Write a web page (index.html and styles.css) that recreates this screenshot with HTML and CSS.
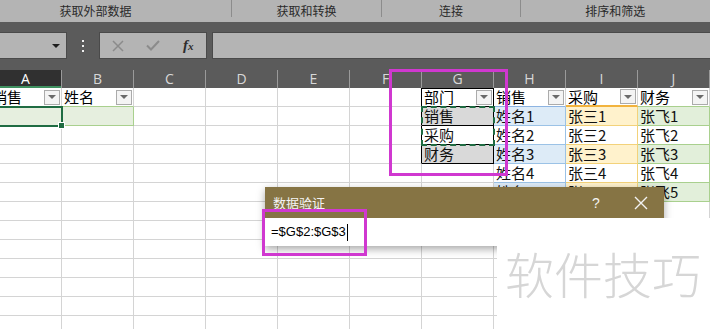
FILE: index.html
```html
<!DOCTYPE html>
<html lang="zh-CN">
<head>
    <meta charset="UTF-8">
    <meta name="viewport" content="width=device-width, initial-scale=1.0">
    <title>数据验证</title>
    <link rel="stylesheet" href="styles.css">
</head>
<body>
    <!-- ribbon group captions -->
    <div class="ribbon-groups">
        <div class="group g-external">获取外部数据</div>
        <div class="group g-transform">获取和转换</div>
        <div class="group g-connect">连接</div>
        <div class="group g-sort">排序和筛选</div>
    </div>

    <!-- name box + formula bar -->
    <div class="formula-bar">
        <div class="name-box"><span class="drop"></span></div>
        <div class="grip"><i></i><i></i><i></i></div>
        <div class="fx-buttons">
            <span><svg width="12" height="12" viewBox="0 0 12 12"><path d="M1 1L11 11M11 1L1 11" stroke="#8b8b8b" stroke-width="1.5" fill="none"/></svg></span>
            <span><svg width="14" height="11" viewBox="0 0 14 11"><path d="M1 5.5L5 9.5L13 1" stroke="#8b8b8b" stroke-width="2" fill="none"/></svg></span>
            <span class="fx"><i>f</i><i class="x">x</i></span>
        </div>
        <div class="formula-input"></div>
    </div>

    <!-- column letters -->
    <div class="col-heads">
        <div class="ch current">A</div>
        <div class="ch">B</div>
        <div class="ch">C</div>
        <div class="ch">D</div>
        <div class="ch">E</div>
        <div class="ch">F</div>
        <div class="ch">G</div>
        <div class="ch">H</div>
        <div class="ch">I</div>
        <div class="ch">J</div>
    </div>

    <div class="cells">
        <!-- row 1 -->
        <div class="c hd tbl-a">销售<span class="fb"></span></div>
        <div class="c hd tbl-a">姓名<span class="fb"></span></div>
        <div class="c"></div>
        <div class="c"></div>
        <div class="c"></div>
        <div class="c edge"></div>
        <div class="c hd dept top">部门<span class="fb"></span></div>
        <div class="c hd head-blue">销售<span class="fb"></span></div>
        <div class="c hd head-gold">采购<span class="fb"></span></div>
        <div class="c hd head-green">财务<span class="fb"></span></div>
        <!-- row 2 -->
        <div class="c active"><span class="handle"></span></div>
        <div class="c picked"></div>
        <div class="c"></div>
        <div class="c"></div>
        <div class="c"></div>
        <div class="c edge"></div>
        <div class="c dept band">销售</div>
        <div class="c blue band">姓名1</div>
        <div class="c gold band">张三1</div>
        <div class="c green band">张飞1</div>
        <!-- row 3 -->
        <div class="c"></div>
        <div class="c"></div>
        <div class="c"></div>
        <div class="c"></div>
        <div class="c"></div>
        <div class="c edge"></div>
        <div class="c dept">采购</div>
        <div class="c blue">姓名2</div>
        <div class="c gold">张三2</div>
        <div class="c green">张飞2</div>
        <!-- row 4 -->
        <div class="c"></div>
        <div class="c"></div>
        <div class="c"></div>
        <div class="c"></div>
        <div class="c"></div>
        <div class="c edge"></div>
        <div class="c dept band">财务</div>
        <div class="c blue band">姓名3</div>
        <div class="c gold band">张三3</div>
        <div class="c green band">张飞3</div>
        <!-- row 5 -->
        <div class="c"></div>
        <div class="c"></div>
        <div class="c"></div>
        <div class="c"></div>
        <div class="c"></div>
        <div class="c"></div>
        <div class="c"></div>
        <div class="c blue">姓名4</div>
        <div class="c gold">张三4</div>
        <div class="c green">张飞4</div>
        <!-- row 6 -->
        <div class="c"></div>
        <div class="c"></div>
        <div class="c"></div>
        <div class="c"></div>
        <div class="c"></div>
        <div class="c"></div>
        <div class="c"></div>
        <div class="c blue band">姓名5</div>
        <div class="c gold band">张三5</div>
        <div class="c green band">张飞5</div>
        <!-- rows 7 - 13 -->
        <div class="c"></div><div class="c"></div><div class="c"></div><div class="c"></div><div class="c"></div>
        <div class="c"></div><div class="c"></div><div class="c"></div><div class="c"></div><div class="c"></div>
        <div class="c"></div><div class="c"></div><div class="c"></div><div class="c"></div><div class="c"></div>
        <div class="c"></div><div class="c"></div><div class="c"></div><div class="c"></div><div class="c"></div>
        <div class="c"></div><div class="c"></div><div class="c"></div><div class="c"></div><div class="c"></div>
        <div class="c"></div><div class="c"></div><div class="c"></div><div class="c"></div><div class="c"></div>
        <div class="c"></div><div class="c"></div><div class="c"></div><div class="c"></div><div class="c"></div>
        <div class="c"></div><div class="c"></div><div class="c"></div><div class="c"></div><div class="c"></div>
        <div class="c"></div><div class="c"></div><div class="c"></div><div class="c"></div><div class="c"></div>
        <div class="c"></div><div class="c"></div><div class="c"></div><div class="c"></div><div class="c"></div>
        <div class="c"></div><div class="c"></div><div class="c"></div><div class="c"></div><div class="c"></div>
        <div class="c"></div><div class="c"></div><div class="c"></div><div class="c"></div><div class="c"></div>
        <div class="c"></div><div class="c"></div><div class="c"></div><div class="c"></div><div class="c"></div>
        <div class="c"></div><div class="c"></div><div class="c"></div><div class="c"></div><div class="c"></div>
    </div>

    <!-- overlays -->
    <div class="ants"></div>
    <div class="mark mark-range"></div>

    <div class="dialog">
        <div class="dialog-title">
            <span>数据验证</span>
            <span class="help">?</span>
            <span class="close"><svg width="14" height="14" viewBox="0 0 14 14"><path d="M1 1L13 13M13 1L1 13" stroke="#f2f2f2" stroke-width="1.4" fill="none"/></svg></span>
        </div>
        <div class="dialog-body">=$G$2:$G$3<span class="cursor"></span></div>
    </div>

    <div class="patch">软件技巧</div>
    <div class="mark mark-input"></div>
</body>
</html>
```

FILE: styles.css
```css
/* General */
body {
    margin: 0;
    width: 710px;
    height: 329px;
    overflow: hidden;
    position: relative;
    background: #fff;
    font-family: "Noto Sans CJK SC", sans-serif;
}

/* Ribbon captions */
.ribbon-groups {
    display: flex;
    height: 22px;
    margin-left: -40px;
    background: #b4b4b4;
    font-size: 12px;
    color: #2a2a2a;
}

.group {
    box-sizing: border-box;
    height: 17px;
    line-height: 21px;
    text-align: center;
    border-right: 1px solid #8c8c8c;
}

.g-external { width: 287px; }
.g-transform { width: 159px; }
.g-connect { width: 146px; }
.g-sort { width: 200px; border-right: none; }

/* Formula bar */
.formula-bar {
    display: flex;
    height: 27px;
    padding: 10px 0 11px;
    background: #5b5b5b;
}

.name-box {
    box-sizing: border-box;
    width: 67px;
    background: #b4b4b4;
    border: 1px solid #4a4a4a;
    border-left: none;
    display: flex;
    align-items: center;
    justify-content: flex-end;
    padding-right: 6px;
}

.drop {
    width: 0;
    height: 0;
    border-left: 4px solid transparent;
    border-right: 4px solid transparent;
    border-top: 4px solid #1e1e1e;
}

.grip {
    width: 32px;
    display: flex;
    flex-direction: column;
    align-items: center;
    justify-content: center;
    gap: 3px;
}

.grip i {
    width: 2px;
    height: 2px;
    background: #f0f0f0;
}

.fx-buttons {
    box-sizing: border-box;
    width: 108px;
    background: #b4b4b4;
    border: 1px solid #4a4a4a;
    display: flex;
    align-items: center;
}

.fx-buttons span {
    width: 36px;
    display: flex;
    justify-content: center;
    align-items: center;
}

.fx {
    font-family: "Liberation Serif", serif;
    font-size: 15px;
    color: #2d2d2d;
    font-weight: bold;
}

.fx .x {
    font-size: 11px;
}

.formula-input {
    flex: 1;
    margin-left: 5px;
    background: #b4b4b4;
    border: 1px solid #4a4a4a;
    border-right: none;
}

/* Column letters */
.col-heads {
    display: grid;
    grid-template-columns: repeat(10, 72px);
    height: 18px;
    margin-left: -10px;
    background: #5b5b5b;
}

.ch {
    box-sizing: border-box;
    border-right: 1px solid #9a9a9a;
    text-align: center;
    font-family: "Open Sans", sans-serif;
    font-size: 14px;
    line-height: 18px;
    color: #d8d8d8;
}

.ch.current {
    background: #303030;
    color: #fff;
    box-shadow: inset 0 -2px 0 #3f9160;
}

/* Cells */
.cells {
    display: grid;
    grid-template-columns: repeat(10, 72px);
    grid-auto-rows: 19px;
    margin-left: -10px;
}

.c {
    box-sizing: border-box;
    position: relative;
    border-right: 1px solid #d4d4d4;
    border-bottom: 1px solid #d4d4d4;
    padding: 0 1px 0 2px;
    font-size: 15px;
    line-height: 18px;
    color: #111;
    white-space: nowrap;
}

.hd {
    display: flex;
    justify-content: space-between;
    align-items: center;
    color: #000;
}

.fb {
    box-sizing: border-box;
    width: 16px;
    height: 15px;
    background: #f4f4f4;
    border: 1px solid #ababab;
    display: flex;
    align-items: center;
    justify-content: center;
}

.fb::after {
    content: "";
    border-left: 4px solid transparent;
    border-right: 4px solid transparent;
    border-top: 4px solid #6a6a6a;
}

.tbl-a {
    border-bottom-color: #a9d08e;
}

.active {
    z-index: 1;
    background: #e6efdf;
    outline: 2px solid #1f6c42;
    outline-offset: -1px;
}

.handle {
    position: absolute;
    right: -4px;
    bottom: -4px;
    width: 5px;
    height: 5px;
    background: #1f6c42;
    border: 1px solid #fff;
}

.picked {
    background: #e6efdf;
    border-right-color: #a9d08e;
    border-bottom-color: #a9d08e;
}

/* Department list */
.edge { border-right-color: #000; }

.dept {
    border-right-color: #000;
    border-bottom-color: #000;
}

.dept.top { box-shadow: inset 0 1px 0 #000; }
.dept.band { background: #d9d9d9; }

/* Banded tables */
.head-blue { border-bottom-color: #8db4e2; }
.head-gold { border-bottom: 2px solid #f2b33d; }
.head-green { border-bottom-color: #a9d08e; }

.blue {
    border-right-color: #9bc2e6;
    border-bottom-color: #9bc2e6;
}
.blue.band { background: #ddebf7; }

.gold {
    border-right-color: #f3d27a;
    border-bottom-color: #f3d27a;
}
.gold.band { background: #fff2cc; }

.green {
    border-right-color: #a9d08e;
    border-bottom-color: #a9d08e;
}
.green.band { background: #e2efda; }

/* Copy marquee around G2:G3 */
.ants {
    position: absolute;
    left: 421px;
    top: 106px;
    width: 74px;
    height: 40px;
    box-sizing: border-box;
    border: 2px dashed #1f6c42;
}

/* Highlight frames */
.mark {
    position: absolute;
    box-sizing: border-box;
    border: 3px solid #d038d0;
    z-index: 5;
}

.mark-range {
    left: 389px;
    top: 69px;
    width: 119px;
    height: 107px;
}

.mark-input {
    left: 262px;
    top: 209px;
    width: 105px;
    height: 47px;
}

/* Data validation dialog */
.dialog {
    position: absolute;
    left: 265px;
    top: 187px;
    width: 399px;
    box-shadow: 0 3px 8px rgba(0, 0, 0, 0.35);
    z-index: 3;
}

.dialog-title {
    display: flex;
    align-items: center;
    height: 31px;
    padding-left: 8px;
    background: #867444;
    color: #f4f4f4;
    font-size: 13px;
}

.help {
    margin-left: auto;
    width: 20px;
    text-align: center;
    font-family: "Liberation Sans", sans-serif;
    font-size: 14px;
}

.close {
    width: 20px;
    margin: 0 13px 0 25px;
    display: flex;
    justify-content: center;
}

.dialog-body {
    height: 28px;
    padding-left: 6px;
    background: #fff;
    font-family: "Liberation Sans", sans-serif;
    font-size: 13px;
    line-height: 28px;
    color: #000;
}

.cursor {
    display: inline-block;
    width: 1px;
    height: 17px;
    margin-left: 1px;
    background: #000;
    vertical-align: middle;
}

/* Watermark patch */
.patch {
    position: absolute;
    left: 497px;
    top: 218px;
    right: 0;
    bottom: 0;
    z-index: 4;
    background: #fff;
    padding: 30px 0 0 8px;
    font-size: 49px;
    font-weight: 300;
    line-height: 50px;
    color: #d6d6d6;
    white-space: nowrap;
}
```
